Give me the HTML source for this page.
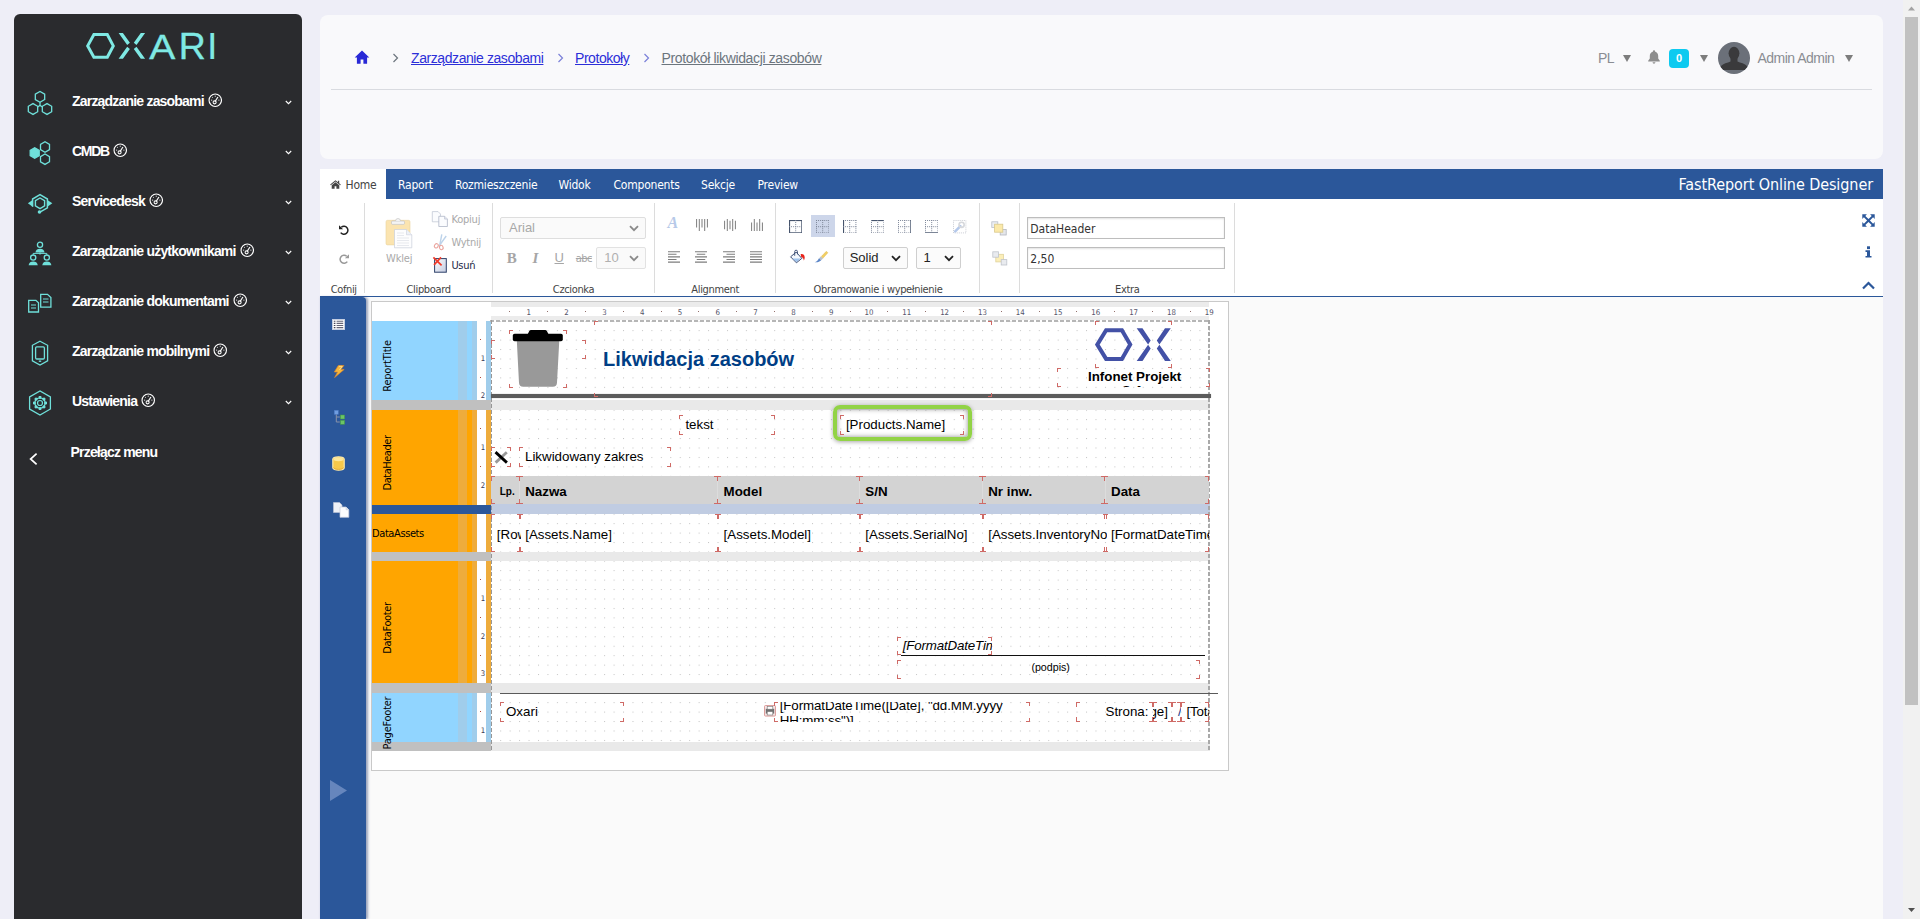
<!DOCTYPE html>
<html lang="pl">
<head>
<meta charset="utf-8">
<title>Protokół likwidacji zasobów</title>
<style>
*{box-sizing:border-box;margin:0;padding:0}
html,body{width:1920px;height:919px;overflow:hidden}
body{position:relative;background:#eeeef7;font-family:"Liberation Sans",sans-serif;font-size:14px;color:#212529}
.abs{position:absolute}
/* ---------- sidebar ---------- */
#side{position:absolute;left:14px;top:14px;width:288px;height:905px;background:#2a2b2e;border-radius:6px 6px 0 0}
#side .item{position:absolute;left:0;width:288px;height:50px}
#side .item .ico{position:absolute;left:11px;top:11.500px;width:30px;height:30px}
#side .item .lbl{position:absolute;left:58px;top:16px;font:bold 14px/18px "Liberation Sans",sans-serif;color:#fff;letter-spacing:-.8px;white-space:nowrap}
#side .item .chev{position:absolute;left:271.300px;top:23.700px;width:7px;height:5px}
#side .gauge{display:inline-block;width:14.500px;height:14.500px;vertical-align:-1.500px;margin-left:4px}
/* ---------- top card ---------- */
#card{position:absolute;left:320px;top:15px;width:1563px;height:144px;background:#f9f9fb;border-radius:8px}
#card .hr{position:absolute;left:11px;top:74px;width:1541px;height:1px;background:#d9dbe0}
.bc{position:absolute;top:34px;font:14px/18px "Liberation Sans",sans-serif;white-space:nowrap;text-decoration:underline;color:#2c2fd8}
.bcsep{position:absolute;top:38px;width:7px;height:10px}
.caret{position:absolute;width:0;height:0;border-left:4.5px solid transparent;border-right:4.5px solid transparent;border-top:7px solid #7d7d7d}
/* ---------- designer ---------- */
#tabs{position:absolute;left:320px;top:169px;width:1563px;height:30px;background:#2b579a;color:#fff;font:12px/30px "DejaVu Sans Condensed","DejaVu Sans",sans-serif;letter-spacing:-.22px}
#tabs span{position:absolute;top:.8px;white-space:nowrap}
#ribbon{position:absolute;left:320px;top:199px;width:1563px;height:98.200px;background:#fff;border-bottom:1.400px solid #2b579a;font:11px/13px "DejaVu Sans Condensed","DejaVu Sans",sans-serif;letter-spacing:-.35px;color:#444}
#ribbon .sep{position:absolute;top:4px;width:1px;height:90px;background:#dcdcdc}
#ribbon .gl{position:absolute;top:84px;white-space:nowrap;text-align:center;color:#444}
#ribbon .t{position:absolute;white-space:nowrap}
.dis{color:#a9a9a9}
.sel{position:absolute;height:22px;border:1px solid #d4d4d4;background:#fff;border-radius:2px;font:13px/20px "Liberation Sans",sans-serif;letter-spacing:0;padding-left:8px;color:#222}
.sel svg{position:absolute;right:6px;top:7px}
.inp{position:absolute;height:22px;border:1px solid #bdbdbd;background:#fff;font:12px/20px "DejaVu Sans Condensed",sans-serif;letter-spacing:0;padding-left:2.300px;padding-top:1px;color:#333;box-shadow:inset 0 1px 2px rgba(0,0,0,.12)}
#work{position:absolute;left:320px;top:297.200px;width:1563px;height:622px;background:#fafafa}
#lbar{position:absolute;left:320px;top:297px;width:46px;height:622px;background:#2b579a;border-top-right-radius:4px;box-shadow:1.500px 0 2.500px rgba(40,60,110,.45)}
#cont{position:absolute;left:371px;top:301.400px;width:858px;height:469.600px;background:#fff;border:1px solid #c9c9c9;overflow:hidden}
/* inside #cont coordinates are page coords minus (372,302) */
#cont .in{position:absolute;left:-372px;top:-302.400px;width:1920px;height:919px}
.band{position:absolute;left:372px;width:119px}
.band .bl{position:absolute;left:0;top:0;bottom:0;width:105px}
.band .s1{position:absolute;left:86px;top:0;bottom:0;width:9px}
.band .s2{position:absolute;left:100px;top:0;bottom:0;width:5px}
.band .rul{position:absolute;left:105px;top:0;bottom:0;width:9.1px;background:#fff}
.band .s3{position:absolute;left:114.1px;top:0;bottom:0;width:4.9px}
.band.blue .bl{background:#91d5ff}.band.blue .s1,.band.blue .s2,.band.blue .s3{background:#a0cdeb}
.band.or .bl{background:#ffa500}.band.or .s1,.band.or .s2,.band.or .s3{background:#eeac3c}
.band .name{position:absolute;left:15.200px;top:50%;width:0;height:0}
.band .name span{position:absolute;left:0;top:0;transform:translate(-50%,-50%) rotate(-90deg);white-space:nowrap;font:11px/13px "DejaVu Sans Condensed",sans-serif;letter-spacing:-.42px;color:#000;margin-top:5px}
.rn{position:absolute;left:478px;width:10px;text-align:center;font:7.700px/10px "DejaVu Sans Condensed",sans-serif;color:#3b3b55}
.rt{position:absolute;left:480px;width:1.3px;height:1.3px;background:#b04a3a}
.gapL{position:absolute;left:372px;width:119px;background:#c0c0c0}
.gapR{position:absolute;left:491px;width:719px;background:#e9e9e9}
.page{position:absolute;left:491px;width:719px;background-color:#fff;overflow:hidden}
.page svg{position:absolute;left:0;top:0}
.ob{position:absolute;white-space:nowrap;overflow:hidden;font:13.33px/15px "Liberation Sans",sans-serif;color:#000;
--c:#cf6a66;
background:
linear-gradient(var(--c),var(--c)) left top/4px 1px no-repeat,
linear-gradient(var(--c),var(--c)) left top/1px 4px no-repeat,
linear-gradient(var(--c),var(--c)) right top/4px 1px no-repeat,
linear-gradient(var(--c),var(--c)) right top/1px 4px no-repeat,
linear-gradient(var(--c),var(--c)) left bottom/4px 1px no-repeat,
linear-gradient(var(--c),var(--c)) left bottom/1px 4px no-repeat,
linear-gradient(var(--c),var(--c)) right bottom/4px 1px no-repeat,
linear-gradient(var(--c),var(--c)) right bottom/1px 4px no-repeat}
.ob.tm{overflow:hidden;background:
linear-gradient(var(--c),var(--c)) left top/4px 1px no-repeat,
linear-gradient(var(--c),var(--c)) left top/1px 5px no-repeat,
linear-gradient(var(--c),var(--c)) right top/4px 1px no-repeat,
linear-gradient(var(--c),var(--c)) right top/1px 5px no-repeat,
linear-gradient(var(--c),var(--c)) left bottom/4px 1px no-repeat,
linear-gradient(var(--c),var(--c)) left bottom/1px 5px no-repeat,
linear-gradient(var(--c),var(--c)) right bottom/4px 1px no-repeat,
linear-gradient(var(--c),var(--c)) right bottom/1px 5px no-repeat}
.ob i.tx{position:absolute;font-style:normal;left:6px}
</style>
</head>
<body>
<svg width="0" height="0" style="position:absolute"><defs><pattern id="dots" x="-.25" y="-.3" width="9.449" height="9.449" patternUnits="userSpaceOnUse"><rect x="0" y="0" width="1" height="1" fill="#c2c2c2"/></pattern></defs></svg>

<!-- ================= SIDEBAR ================= -->
<div id="side">
<svg class="abs" style="left:62px;top:10px" width="160" height="44" viewBox="76 24 160 44" role="img"><title>OXARI</title>
<polygon points="87.7,45.9 93.9,34.5 107.3,34.5 113.3,45.9 107.3,57.3 93.9,57.3" fill="none" stroke="#7fe9e4" stroke-width="3"/>
<path d="M118.60 33.00 L122.90 33.00 L129.90 42.75 L127.20 45.10Z M118.60 58.80 L122.90 58.80 L129.90 49.05 L127.20 46.70Z M145.10 33.00 L140.80 33.00 L133.80 42.75 L136.50 45.10Z M145.10 58.80 L140.80 58.80 L133.80 49.05 L136.50 46.70Z" fill="#7fe9e4"/>
<text transform="translate(149.300 58.800) scale(1.085 1)" font-family="Liberation Sans, sans-serif" font-size="36" fill="#7fe9e4" stroke="#7fe9e4" stroke-width=".35">A</text>
<text transform="translate(178.800 58.800) scale(1.040 1)" font-family="Liberation Sans, sans-serif" font-size="36" fill="#7fe9e4" stroke="#7fe9e4" stroke-width=".35">R</text>
<text x="207.300" y="58.800" font-family="Liberation Sans, sans-serif" font-size="36" fill="#7fe9e4" stroke="#7fe9e4" stroke-width=".2">I</text>
</svg>
<div class="item" style="top:62px"><svg class="ico" viewBox="0 0 30 30" fill="none" stroke="#6fe0da" stroke-width="1.3"><polygon points="19.68,11.50 15.00,14.20 10.32,11.50 10.32,6.10 15.00,3.40 19.68,6.10"/><polygon points="12.68,23.70 8.00,26.40 3.32,23.70 3.32,18.30 8.00,15.60 12.68,18.30"/><polygon points="26.68,23.70 22.00,26.40 17.32,23.70 17.32,18.30 22.00,15.60 26.68,18.30"/><path d="M15 14.2v3.3M15 17.5l-2.4 1.4M15 17.5l2.4 1.4"/></svg><span class="lbl">Zarządzanie zasobami<svg class="gauge" viewBox="0 0 14 14"><circle cx="7" cy="7" r="6" fill="none" stroke="#fff" stroke-width="1.1"/><path d="M7 2.6v1M3 6.9h1M10 6.9h1M4.1 4l.7.7" stroke="#fff" stroke-width=".9" fill="none"/><path d="M9.6 3.9 6.6 8.6" stroke="#fff" stroke-width="1.1" fill="none"/><circle cx="6.4" cy="9" r="1.5" fill="none" stroke="#fff" stroke-width="1"/></svg></span><svg class="chev" viewBox="0 0 7 5"><path d="M.8 1 3.5 3.7 6.2 1" fill="none" stroke="#fff" stroke-width="1.1"/></svg></div>
<div class="item" style="top:112px"><svg class="ico" viewBox="0 0 30 30" fill="none" stroke="#6fe0da" stroke-width="1.3"><polygon points="14.20,17.60 9.70,20.20 5.20,17.60 5.20,12.40 9.70,9.80 14.20,12.40" fill="#6fe0da"/><polygon points="24.50,11.60 20.00,14.20 15.50,11.60 15.50,6.40 20.00,3.80 24.50,6.40"/><polygon points="24.50,23.80 20.00,26.40 15.50,23.80 15.50,18.60 20.00,16.00 24.50,18.60"/></svg><span class="lbl"><span style="letter-spacing:-1.300px">CMDB</span><svg class="gauge" viewBox="0 0 14 14"><circle cx="7" cy="7" r="6" fill="none" stroke="#fff" stroke-width="1.1"/><path d="M7 2.6v1M3 6.9h1M10 6.9h1M4.1 4l.7.7" stroke="#fff" stroke-width=".9" fill="none"/><path d="M9.6 3.9 6.6 8.6" stroke="#fff" stroke-width="1.1" fill="none"/><circle cx="6.4" cy="9" r="1.5" fill="none" stroke="#fff" stroke-width="1"/></svg></span><svg class="chev" viewBox="0 0 7 5"><path d="M.8 1 3.5 3.7 6.2 1" fill="none" stroke="#fff" stroke-width="1.1"/></svg></div>
<div class="item" style="top:162px"><svg class="ico" viewBox="0 0 30 30" fill="none" stroke="#6fe0da" stroke-width="1.5"><polygon points="19.59,17.95 15.00,20.60 10.41,17.95 10.41,12.65 15.00,10.00 19.59,12.65" stroke-width="1.4"/><path d="M7.600 18.800V11L15 6.700 22.400 11v8.800L15.300 23.900" stroke-linejoin="miter"/><path d="M2.900 15.300 7.600 11.900v6.800Z" fill="#6fe0da" stroke="none"/><path d="M27.300 15.300 22.400 11.900v6.800Z" fill="#6fe0da" stroke="none"/><circle cx="14.500" cy="24" r="1.800" fill="#6fe0da" stroke="none"/></svg><span class="lbl">Servicedesk<svg class="gauge" viewBox="0 0 14 14"><circle cx="7" cy="7" r="6" fill="none" stroke="#fff" stroke-width="1.1"/><path d="M7 2.6v1M3 6.9h1M10 6.9h1M4.1 4l.7.7" stroke="#fff" stroke-width=".9" fill="none"/><path d="M9.6 3.9 6.6 8.6" stroke="#fff" stroke-width="1.1" fill="none"/><circle cx="6.4" cy="9" r="1.5" fill="none" stroke="#fff" stroke-width="1"/></svg></span><svg class="chev" viewBox="0 0 7 5"><path d="M.8 1 3.5 3.7 6.2 1" fill="none" stroke="#fff" stroke-width="1.1"/></svg></div>
<div class="item" style="top:212px"><svg class="ico" viewBox="0 0 30 30" fill="none" stroke="#6fe0da" stroke-width="1.3"><circle cx="15" cy="6.8" r="2.6"/><path d="M10.4 14.399999999999999c.5-2.600 2.200-3.600 4.600-3.600s4.100 1 4.600 3.600z" fill="#6fe0da" stroke="none"/><circle cx="8.2" cy="19.6" r="2.6"/><path d="M3.5999999999999996 27.200000000000003c.5-2.600 2.200-3.600 4.600-3.600s4.100 1 4.600 3.600z" fill="#6fe0da" stroke="none"/><circle cx="21.8" cy="19.6" r="2.6"/><path d="M17.200000000000003 27.200000000000003c.5-2.600 2.200-3.600 4.600-3.600s4.100 1 4.600 3.600z" fill="#6fe0da" stroke="none"/><path d="M15 14.400v2.200M8.200 16.800v-1.400h13.600v1.400" stroke-width="1"/></svg><span class="lbl">Zarządzanie użytkownikami<svg class="gauge" viewBox="0 0 14 14"><circle cx="7" cy="7" r="6" fill="none" stroke="#fff" stroke-width="1.1"/><path d="M7 2.6v1M3 6.9h1M10 6.9h1M4.1 4l.7.7" stroke="#fff" stroke-width=".9" fill="none"/><path d="M9.6 3.9 6.6 8.6" stroke="#fff" stroke-width="1.1" fill="none"/><circle cx="6.4" cy="9" r="1.5" fill="none" stroke="#fff" stroke-width="1"/></svg></span><svg class="chev" viewBox="0 0 7 5"><path d="M.8 1 3.5 3.7 6.2 1" fill="none" stroke="#fff" stroke-width="1.1"/></svg></div>
<div class="item" style="top:262px"><svg class="ico" style="top:10.500px" viewBox="0 0 30 30" fill="none" stroke="#6fe0da" stroke-width="1.3"><path d="M3.700 13.300h7.200l2.600 2.400v9.300H3.700z"/><path d="M6 18h5M6 21h5" stroke-width="1.100"/><path d="M15.700 7.300h6.800l3.400 3.200v9.600H15.700z"/><path d="M18 12h5.500M18 15h5.500" stroke-width="1.100"/></svg><span class="lbl">Zarządzanie dokumentami<svg class="gauge" viewBox="0 0 14 14"><circle cx="7" cy="7" r="6" fill="none" stroke="#fff" stroke-width="1.1"/><path d="M7 2.6v1M3 6.9h1M10 6.9h1M4.1 4l.7.7" stroke="#fff" stroke-width=".9" fill="none"/><path d="M9.6 3.9 6.6 8.6" stroke="#fff" stroke-width="1.1" fill="none"/><circle cx="6.4" cy="9" r="1.5" fill="none" stroke="#fff" stroke-width="1"/></svg></span><svg class="chev" viewBox="0 0 7 5"><path d="M.8 1 3.5 3.7 6.2 1" fill="none" stroke="#fff" stroke-width="1.1"/></svg></div>
<div class="item" style="top:312px"><svg class="ico" viewBox="0 0 30 30" fill="none" stroke="#6fe0da" stroke-width="1.3"><path d="M15 3.2 22.6 7.3V22.9L15 27 7.4 22.9V7.3Z"/><rect x="10.6" y="8.8" width="8.8" height="12.2" rx="1.2"/><path d="M13.8 23.2h2.4" stroke-width="1.4"/></svg><span class="lbl">Zarządzanie mobilnymi<svg class="gauge" viewBox="0 0 14 14"><circle cx="7" cy="7" r="6" fill="none" stroke="#fff" stroke-width="1.1"/><path d="M7 2.6v1M3 6.9h1M10 6.9h1M4.1 4l.7.7" stroke="#fff" stroke-width=".9" fill="none"/><path d="M9.6 3.9 6.6 8.6" stroke="#fff" stroke-width="1.1" fill="none"/><circle cx="6.4" cy="9" r="1.5" fill="none" stroke="#fff" stroke-width="1"/></svg></span><svg class="chev" viewBox="0 0 7 5"><path d="M.8 1 3.5 3.7 6.2 1" fill="none" stroke="#fff" stroke-width="1.1"/></svg></div>
<div class="item" style="top:362px"><svg class="ico" viewBox="0 0 30 30" fill="none" stroke="#6fe0da" stroke-width="1.3"><polygon points="25.39,21.00 15.00,27.00 4.61,21.00 4.61,9.00 15.00,3.00 25.39,9.00"/><circle cx="15" cy="15" r="5.2" stroke-width="1.3"/><circle cx="15" cy="15" r="2.4" stroke-width="1.2"/><path d="M19.20 15.00L22.00 15.00" stroke-width="2.6"/><path d="M17.97 17.97L19.95 19.95" stroke-width="2.6"/><path d="M15.00 19.20L15.00 22.00" stroke-width="2.6"/><path d="M12.03 17.97L10.05 19.95" stroke-width="2.6"/><path d="M10.80 15.00L8.00 15.00" stroke-width="2.6"/><path d="M12.03 12.03L10.05 10.05" stroke-width="2.6"/><path d="M15.00 10.80L15.00 8.00" stroke-width="2.6"/><path d="M17.97 12.03L19.95 10.05" stroke-width="2.6"/><circle cx="15" cy="15" r="3.6" fill="#2a2b2e" stroke="none"/><circle cx="15" cy="15" r="2.5" stroke-width="1.2"/></svg><span class="lbl">Ustawienia<svg class="gauge" viewBox="0 0 14 14"><circle cx="7" cy="7" r="6" fill="none" stroke="#fff" stroke-width="1.1"/><path d="M7 2.6v1M3 6.9h1M10 6.9h1M4.1 4l.7.7" stroke="#fff" stroke-width=".9" fill="none"/><path d="M9.6 3.9 6.6 8.6" stroke="#fff" stroke-width="1.1" fill="none"/><circle cx="6.4" cy="9" r="1.5" fill="none" stroke="#fff" stroke-width="1"/></svg></span><svg class="chev" viewBox="0 0 7 5"><path d="M.8 1 3.5 3.7 6.2 1" fill="none" stroke="#fff" stroke-width="1.1"/></svg></div>
<svg class="abs" style="left:14px;top:438px" width="12" height="14" viewBox="0 0 12 14"><path d="M8.6 1.6 2.6 7l6 5.4" fill="none" stroke="#fff" stroke-width="1.7"/></svg>
<span class="abs" style="left:56.5px;top:429px;font:bold 14px/18px 'Liberation Sans',sans-serif;color:#fff;letter-spacing:-.8px;white-space:nowrap">Przełącz menu</span>
</div>

<!-- ================= TOP CARD ================= -->
<div id="card">
  <svg class="abs" style="left:34px;top:35px" width="16" height="15" viewBox="0 0 16 15"><path d="M8 .6.7 7.4h2.2v6.4h3.7V9.6h2.8v4.2h3.7V7.4h2.2Z" fill="#2929d6"/></svg>
  <svg class="bcsep" style="left:72px" viewBox="0 0 7 10"><path d="M1.5 1 5.5 5 1.5 9" fill="none" stroke="#6c757d" stroke-width="1.2"/></svg>
  <span class="bc" style="left:91px;letter-spacing:-.42px">Zarządzanie zasobami</span>
  <svg class="bcsep" style="left:236.5px" viewBox="0 0 7 10"><path d="M1.5 1 5.5 5 1.5 9" fill="none" stroke="#7b80d8" stroke-width="1.2"/></svg>
  <span class="bc" style="left:255px;letter-spacing:-.45px">Protokoły</span>
  <svg class="bcsep" style="left:322.5px" viewBox="0 0 7 10"><path d="M1.5 1 5.5 5 1.5 9" fill="none" stroke="#7b80d8" stroke-width="1.2"/></svg>
  <span class="bc" style="left:341.5px;letter-spacing:-.36px;color:#6c757d">Protokół likwidacji zasobów</span>
  <div class="hr"></div>
  <span class="abs" style="left:1278px;top:34px;font:14px/18px 'Liberation Sans',sans-serif;color:#8a8d93;letter-spacing:-.6px">PL</span>
  <div class="caret" style="left:1302.5px;top:39.5px"></div>
  <svg class="abs" style="left:1327px;top:34px" width="14" height="16" viewBox="0 0 14 16"><path d="M7 1.2c-.6 0-1 .4-1 1v.4C3.900 3.200 2.800 5 2.800 7v2.600L1.200 11.800v.8h11.600v-.8L11.200 9.600V7c0-2-1.100-3.800-3.200-4.400v-.4c0-.6-.4-1-1-1zM5.600 13.300c0 .8.600 1.400 1.400 1.400s1.400-.6 1.400-1.400z" fill="#8d8d8d"/></svg>
  <div class="abs" style="left:1349px;top:34px;width:20px;height:19px;border-radius:4px;background:#0dcaf0;color:#fff;font:bold 11px/19px 'Liberation Sans',sans-serif;text-align:center">0</div>
  <div class="caret" style="left:1379.5px;top:39.5px"></div>
  <svg class="abs" style="left:1398px;top:27px" width="32" height="32" viewBox="0 0 32 32"><defs><clipPath id="avc"><circle cx="16" cy="16" r="16"/></clipPath></defs><circle cx="16" cy="16" r="16" fill="#6b7079"/><g clip-path="url(#avc)" fill="#3a3a3c"><ellipse cx="16" cy="11.300" rx="5.400" ry="6.600"/><path d="M12.500 15h7v4.500c3 1.300 7.500 2.200 9.500 4.500 1 1.200 1 3 1 4H2c0-1 0-2.800 1-4 2-2.300 6.500-3.200 9.500-4.500z"/></g></svg>
  <span class="abs" style="left:1437.5px;top:34px;font:14px/18px 'Liberation Sans',sans-serif;color:#8a8d93;letter-spacing:-.52px;white-space:nowrap">Admin Admin</span>
  <div class="caret" style="left:1524.5px;top:39.5px"></div>
</div>

<!-- ================= DESIGNER ================= -->
<div id="tabs">
  <div class="abs" style="left:0;top:0;width:66px;height:30px;background:#fff"></div>
  <svg class="abs" style="left:10px;top:11px" width="11" height="9" viewBox="0 0 11 9"><path d="M5.500 .2.200 4.600l.6.700L5.500 1.500l4.700 3.800.6-.7L9.200 3.300V.8H7.900v1.400ZM1.700 5.200v3.600h2.900V6.300h1.800v2.500h2.900V5.200L5.500 2.200Z" fill="#444"/></svg>
  <span style="left:25.500px;color:#444">Home</span>
  <span style="left:78px">Raport</span>
  <span style="left:135px">Rozmieszczenie</span>
  <span style="left:238.500px">Widok</span>
  <span style="left:293.500px">Components</span>
  <span style="left:381px">Sekcje</span>
  <span style="left:437.500px">Preview</span>
  <span style="right:10px;font-size:16px;letter-spacing:-.08px">FastReport Online Designer</span>
</div>
<div id="ribbon">
<div class="sep" style="left:44.0px"></div>
<div class="sep" style="left:171.7px"></div>
<div class="sep" style="left:334.0px"></div>
<div class="sep" style="left:455.0px"></div>
<div class="sep" style="left:658.8px"></div>
<div class="sep" style="left:698.8px"></div>
<div class="sep" style="left:914.0px"></div>
<span class="gl" style="left:-36.3px;width:120px">Cofnij</span>
<span class="gl" style="left:48.599999999999994px;width:120px">Clipboard</span>
<span class="gl" style="left:193.55px;width:120px">Czcionka</span>
<span class="gl" style="left:335.15px;width:120px">Alignment</span>
<span class="gl" style="left:468.0px;width:180px">Obramowanie i wypełnienie</span>
<span class="gl" style="left:747.25px;width:120px">Extra</span>
<svg class="abs" style="left:18px;top:25px" width="12" height="12" viewBox="0 0 12 12"><path d="M3.300 3.200A4 4 0 1 1 2.700 8.600" fill="none" stroke="#222" stroke-width="1.500"/><path d="M1 1.200v4.100h4.100Z" fill="#222"/></svg>
<svg class="abs" style="left:18px;top:54px" width="12" height="12" viewBox="0 0 12 12"><path d="M8.700 3.200A4 4 0 1 0 9.300 8.600" fill="none" stroke="#9a9a9a" stroke-width="1.500"/><path d="M11 1.200v4.100H6.900Z" fill="#9a9a9a"/></svg>
<svg class="abs" style="left:65px;top:18px" width="29" height="32" viewBox="385 217 29 32">
<rect x="386" y="220.300" width="24" height="24.600" rx="1.500" fill="#fbe4b0" stroke="#e9d3a0" stroke-width=".6"/>
<rect x="391.500" y="221" width="13" height="3.400" rx="1" fill="#f4f4f4" stroke="#bdbdbd" stroke-width=".6"/>
<path d="M395.500 221a2.500 2.500 0 0 1 5 0" fill="#f4f4f4" stroke="#bdbdbd" stroke-width=".6"/>
<path d="M394.500 229.500h12l5.300 5.300v13h-17.300z" fill="#fdfdfe" stroke="#c9cfdb" stroke-width=".7"/>
<path d="M406.500 229.500v5.300h5.300" fill="#eef1f6" stroke="#c9cfdb" stroke-width=".6"/>
<path d="M397 233h7M397 235.500h7M397 238h12M397 240.500h12M397 243h12M397 245.500h12" stroke="#dcdfe6" stroke-width=".7"/>
</svg>
<span class="t dis" style="left:66px;top:52.5px;letter-spacing:-.15px">Wklej</span>
<svg class="abs" style="left:111px;top:11px" width="18" height="18" viewBox="431 210 18 18">
<path d="M432.300 211.600h5.800l2.400 2.400v7.800h-8.200z" fill="#fbfcfe" stroke="#bcc3d1" stroke-width=".7"/>
<path d="M438.800 216.300h5.800l2.800 2.800v7.400h-8.600z" fill="#fbfcfe" stroke="#aeb6c7" stroke-width=".8"/>
<path d="M444.600 216.300v2.800h2.800" fill="#e4e8f0" stroke="#aeb6c7" stroke-width=".6"/></svg>
<span class="t dis" style="left:131.4px;top:13.5px;letter-spacing:-.2px">Kopiuj</span>
<svg class="abs" style="left:113px;top:34px" width="15" height="18" viewBox="433 233 15 18">
<path d="M441.800 234.300 439.600 246M446.200 236 439 246.200" stroke="#bdd3ea" stroke-width="1.400" fill="none"/>
<ellipse cx="436.300" cy="245.800" rx="1.800" ry="2.200" fill="none" stroke="#eaa39c" stroke-width="1.100" transform="rotate(30 436.300 245.800)"/>
<ellipse cx="441.300" cy="247.500" rx="1.800" ry="2.200" fill="none" stroke="#eaa39c" stroke-width="1.100" transform="rotate(-20 441.300 247.500)"/></svg>
<span class="t dis" style="left:131.4px;top:36.5px;letter-spacing:-.25px">Wytnij</span>
<svg class="abs" style="left:112px;top:57px" width="16" height="18" viewBox="432 256 16 18">
<defs><linearGradient id="gdl" x1="0" y1="0" x2="1" y2="1"><stop offset="0" stop-color="#fff"/><stop offset="1" stop-color="#c3cbe0"/></linearGradient></defs>
<rect x="434.600" y="258.600" width="11.700" height="13.600" fill="url(#gdl)" stroke="#2c3f68" stroke-width="1"/>
<path d="M433.400 257.400 441.600 265.400M441 257.400 434 264.800" stroke="#f03a2a" stroke-width="1.700" fill="none"/></svg>
<span class="t" style="left:131.4px;top:59.5px;color:#1d2947;letter-spacing:-.3px">Usuń</span>
<div class="sel" style="left:180px;top:18px;width:146px;background:#fafafa;color:#a8a8a8;border-color:#dedede">Arial<svg width="10" height="7" viewBox="0 0 10 7"><path d="M1 1.200 5 5.200 9 1.200" fill="none" stroke="#8a8a8a" stroke-width="1.800"/></svg></div>
<div class="sel" style="left:276px;top:48px;width:50px;background:#fafafa;color:#b0b0b0;border-color:#e2e2e2;padding-left:7.300px">10<svg width="10" height="7" viewBox="0 0 10 7"><path d="M1 1.200 5 5.200 9 1.200" fill="none" stroke="#8a8a8a" stroke-width="1.800"/></svg></div>
<span class="t" style="left:186.7px;top:50px;font:bold 15px/18px 'Liberation Serif',serif;color:#a6a6a6;letter-spacing:0">B</span>
<span class="t" style="left:212.5px;top:50px;font:italic bold 15px/18px 'Liberation Serif',serif;color:#a6a6a6;letter-spacing:0">I</span>
<span class="t" style="left:234.5px;top:50px;font:13px/18px 'Liberation Sans',sans-serif;color:#a6a6a6;text-decoration:underline;letter-spacing:0">U</span>
<span class="t" style="left:255.8px;top:51.5px;font:11px/16px 'DejaVu Sans Condensed',sans-serif;color:#a6a6a6;text-decoration:line-through;letter-spacing:-.6px">abc</span>
<span class="t" style="left:347.5px;top:14.5px;font:italic bold 16px/18px 'Liberation Serif',serif;color:#b7c9e8;letter-spacing:0">A</span>
<svg class="abs" style="left:375.7px;top:20px" width="12" height="12" viewBox="0 0 12 12"><path d="M0.60 0.00v8.5M3.30 0.00v12M6.00 0.00v8.5M8.70 0.00v12M11.40 0.00v8.5" stroke="#7d7d7d" stroke-width="1" fill="none"/></svg>
<svg class="abs" style="left:403.5px;top:20px" width="12" height="12" viewBox="0 0 12 12"><path d="M0.60 1.75v8.5M3.30 0.00v12M6.00 1.75v8.5M8.70 0.00v12M11.40 1.75v8.5" stroke="#7d7d7d" stroke-width="1" fill="none"/></svg>
<svg class="abs" style="left:430.6px;top:20px" width="12" height="12" viewBox="0 0 12 12"><path d="M0.60 3.50v8.5M3.30 0.00v12M6.00 3.50v8.5M8.70 0.00v12M11.40 3.50v8.5" stroke="#7d7d7d" stroke-width="1" fill="none"/></svg>
<svg class="abs" style="left:347.8px;top:51.6px" width="12" height="12" viewBox="0 0 12 12"><path d="M0.00 0.70h12M0.00 3.30h8.5M0.00 5.90h12M0.00 8.50h8.5M0.00 11.10h12" stroke="#7d7d7d" stroke-width="1.100" fill="none"/></svg>
<svg class="abs" style="left:375px;top:51.6px" width="12" height="12" viewBox="0 0 12 12"><path d="M0.00 0.70h12M1.75 3.30h8.5M0.00 5.90h12M1.75 8.50h8.5M0.00 11.10h12" stroke="#7d7d7d" stroke-width="1.100" fill="none"/></svg>
<svg class="abs" style="left:403px;top:51.6px" width="12" height="12" viewBox="0 0 12 12"><path d="M0.00 0.70h12M3.50 3.30h8.5M0.00 5.90h12M3.50 8.50h8.5M0.00 11.10h12" stroke="#7d7d7d" stroke-width="1.100" fill="none"/></svg>
<svg class="abs" style="left:430.2px;top:51.6px" width="12" height="12" viewBox="0 0 12 12"><path d="M0.00 0.70h12M0.00 3.30h12M0.00 5.90h12M0.00 8.50h12M0.00 11.10h12" stroke="#7d7d7d" stroke-width="1.100" fill="none"/></svg>
<div class="abs" style="left:491px;top:16px;width:24px;height:22px;background:#cdd6ea"></div>
<svg class="abs" style="left:468.9px;top:20.8px" width="13.400" height="13.400" viewBox="0 0 13.400 13.400"><path d="M0 0.5L13.4 0.5" stroke="#46546c" stroke-width="1.200"/><path d="M0 12.9L13.4 12.9" stroke="#46546c" stroke-width="1.200"/><path d="M0.5 0L0.5 13.4" stroke="#46546c" stroke-width="1.200"/><path d="M12.9 0L12.9 13.4" stroke="#46546c" stroke-width="1.200"/><path d="M0 6.700h13.400M6.700 0v13.400" stroke="#7c8698" stroke-width="1" stroke-dasharray="1 1.060"/></svg>
<svg class="abs" style="left:496.1px;top:20.8px" width="13.400" height="13.400" viewBox="0 0 13.400 13.400"><path d="M0 0.5L13.4 0.5" stroke="#7c8698" stroke-width="1" stroke-dasharray="1 1.060"/><path d="M0 12.9L13.4 12.9" stroke="#7c8698" stroke-width="1" stroke-dasharray="1 1.060"/><path d="M0.5 0L0.5 13.4" stroke="#7c8698" stroke-width="1" stroke-dasharray="1 1.060"/><path d="M12.9 0L12.9 13.4" stroke="#7c8698" stroke-width="1" stroke-dasharray="1 1.060"/><path d="M0 6.700h13.400M6.700 0v13.400" stroke="#7c8698" stroke-width="1" stroke-dasharray="1 1.060"/></svg>
<svg class="abs" style="left:523.3px;top:20.8px" width="13.400" height="13.400" viewBox="0 0 13.400 13.400"><path d="M0 0.5L13.4 0.5" stroke="#7c8698" stroke-width="1" stroke-dasharray="1 1.060"/><path d="M0 12.9L13.4 12.9" stroke="#7c8698" stroke-width="1" stroke-dasharray="1 1.060"/><path d="M0.5 0L0.5 13.4" stroke="#46546c" stroke-width="1.200"/><path d="M12.9 0L12.9 13.4" stroke="#7c8698" stroke-width="1" stroke-dasharray="1 1.060"/><path d="M0 6.700h13.400M6.700 0v13.400" stroke="#7c8698" stroke-width="1" stroke-dasharray="1 1.060"/></svg>
<svg class="abs" style="left:550.5px;top:20.8px" width="13.400" height="13.400" viewBox="0 0 13.400 13.400"><path d="M0 0.5L13.4 0.5" stroke="#46546c" stroke-width="1.200"/><path d="M0 12.9L13.4 12.9" stroke="#7c8698" stroke-width="1" stroke-dasharray="1 1.060"/><path d="M0.5 0L0.5 13.4" stroke="#7c8698" stroke-width="1" stroke-dasharray="1 1.060"/><path d="M12.9 0L12.9 13.4" stroke="#7c8698" stroke-width="1" stroke-dasharray="1 1.060"/><path d="M0 6.700h13.400M6.700 0v13.400" stroke="#7c8698" stroke-width="1" stroke-dasharray="1 1.060"/></svg>
<svg class="abs" style="left:577.7px;top:20.8px" width="13.400" height="13.400" viewBox="0 0 13.400 13.400"><path d="M0 0.5L13.4 0.5" stroke="#7c8698" stroke-width="1" stroke-dasharray="1 1.060"/><path d="M0 12.9L13.4 12.9" stroke="#7c8698" stroke-width="1" stroke-dasharray="1 1.060"/><path d="M0.5 0L0.5 13.4" stroke="#7c8698" stroke-width="1" stroke-dasharray="1 1.060"/><path d="M12.9 0L12.9 13.4" stroke="#46546c" stroke-width="1.200"/><path d="M0 6.700h13.400M6.700 0v13.400" stroke="#7c8698" stroke-width="1" stroke-dasharray="1 1.060"/></svg>
<svg class="abs" style="left:604.9px;top:20.8px" width="13.400" height="13.400" viewBox="0 0 13.400 13.400"><path d="M0 0.5L13.4 0.5" stroke="#7c8698" stroke-width="1" stroke-dasharray="1 1.060"/><path d="M0 12.9L13.4 12.9" stroke="#46546c" stroke-width="1.200"/><path d="M0.5 0L0.5 13.4" stroke="#7c8698" stroke-width="1" stroke-dasharray="1 1.060"/><path d="M12.9 0L12.9 13.4" stroke="#7c8698" stroke-width="1" stroke-dasharray="1 1.060"/><path d="M0 6.700h13.400M6.700 0v13.400" stroke="#7c8698" stroke-width="1" stroke-dasharray="1 1.060"/></svg>
<svg class="abs" style="left:632.9px;top:20.8px" width="14" height="14" viewBox="0 0 14 14"><rect x=".5" y=".5" width="12.400" height="12.400" fill="none" stroke="#c9ccd3" stroke-dasharray="1 1.060"/><path d="M2.200 11.300 7.400 6.100" stroke="#b4c8ea" stroke-width="2.600" stroke-linecap="round"/><circle cx="8.600" cy="4.800" r="2.600" fill="none" stroke="#d6d8dc" stroke-width="1.600"/></svg>
<svg class="abs" style="left:469px;top:50px" width="17" height="15" viewBox="0 0 17 15"><path d="M1.600 7.800 7.200 3.100 12.800 9.400 7.400 13.800Z" fill="#f4f8fd" stroke="#3b4d74" stroke-width="1"/><path d="M5.700 6.800V2.600a1.400 1.400 0 0 1 2.800 0v2.700" fill="none" stroke="#3b4d74" stroke-width=".9"/><path d="M11.600 5.200c2.400-.8 4.200.6 4.100 3.600-.1 1.300-.4 2-.9 2.700-.2-2-.900-3.200-2.600-3.600z" fill="#e8241c"/><path d="M3.500 9.500l4 3.600 4.200-3.500z" fill="#9fc3ee"/></svg>
<svg class="abs" style="left:493.5px;top:51px" width="15" height="13" viewBox="0 0 15 13"><path d="M7.200 6.600 12.300 1.300l1.600 1.400L8.900 8.300Z" fill="#f2cf63" stroke="#d9b145" stroke-width=".4"/><path d="M5 8.200 7 6.400l2 2-1.800 1.800Z" fill="#b9c0cc"/><path d="M.6 12.200c2-.4 3.200-1.500 4.400-4l2.200 2c-1.400 1.500-3.600 2.300-6.600 2z" fill="#5c86c8"/></svg>
<div class="sel" style="left:523px;top:48px;width:65px;background:#fbfbfb;border-color:#cfcfcf;padding-left:5.700px">Solid<svg width="10" height="7" viewBox="0 0 10 7"><path d="M1 1.200 5 5.200 9 1.200" fill="none" stroke="#222" stroke-width="1.800"/></svg></div>
<div class="sel" style="left:596px;top:48px;width:45px;background:#fbfbfb;border-color:#cfcfcf;padding-left:6.500px">1<svg width="10" height="7" viewBox="0 0 10 7"><path d="M1 1.200 5 5.200 9 1.200" fill="none" stroke="#222" stroke-width="1.800"/></svg></div>
<svg class="abs" style="left:670.5px;top:21.5px" width="16" height="15" viewBox="0 0 16 15"><rect x=".8" y=".8" width="6" height="5.600" fill="#eceff4" stroke="#b9bec8" stroke-width=".8"/><rect x="9.200" y="8.400" width="6" height="5.600" fill="#e4e6ea" stroke="#b3b7c0" stroke-width=".8"/><rect x="3.600" y="3.200" width="8.200" height="8" fill="#fbe9a9" stroke="#d9c98c" stroke-width=".8"/></svg>
<svg class="abs" style="left:671.7px;top:51.5px" width="16" height="15" viewBox="0 0 16 15"><rect x="3.800" y="3.300" width="7.600" height="7.600" fill="#fbeeb8" stroke="#e0d29c" stroke-width=".8"/><rect x=".8" y=".8" width="5.600" height="5.400" fill="#e9ebef" stroke="#bfc3cb" stroke-width=".8"/><rect x="9.200" y="8.600" width="5.600" height="5.400" fill="#e9ebef" stroke="#bfc3cb" stroke-width=".8"/></svg>
<div class="inp" style="left:707px;top:18px;width:198px">DataHeader</div>
<div class="inp" style="left:707px;top:48px;width:198px">2,50</div>
<svg class="abs" style="left:1541.5px;top:14.8px" width="13" height="13" viewBox="0 0 13 13"><path d="M.3.300h4.600L3.300 1.900 6.500 5.100 9.700 1.900 8.100.3h4.600v4.600L11.100 3.300 7.900 6.500l3.200 3.200 1.600-1.600v4.600H8.100l1.600-1.600L6.500 7.900 3.300 11.100l1.600 1.600H.3V8.100l1.600 1.600L5.100 6.500 1.900 3.300.3 4.900Z" fill="#2b579a"/></svg>
<svg class="abs" style="left:1545px;top:47px" width="7" height="12" viewBox="0 0 7 12"><rect x="2" y=".3" width="3" height="2.800" fill="#2b579a"/><path d="M.5 4.300H5v5.600h1.500v1.600H.5V9.900H2V5.900H.5Z" fill="#2b579a"/></svg>
<svg class="abs" style="left:1541.5px;top:82px" width="13" height="9" viewBox="0 0 13 9"><path d="M1 7.500 6.500 2 12 7.500" fill="none" stroke="#2b579a" stroke-width="2.200"/></svg>
</div>
<div id="work"></div>
<div id="lbar">
<svg class="abs" style="left:12px;top:22px" width="13" height="11" viewBox="0 0 13 11"><rect x=".3" y=".3" width="12.400" height="10.400" fill="#fdfdfd" stroke="#c9d1e4" stroke-width=".6"/><path d="M1.800 2.300h1.600M1.800 4.400h1.600M1.800 6.500h1.600M1.800 8.600h1.600" stroke="#445" stroke-width="1.100"/><path d="M4.600 2.300h6.600M4.600 4.400h6.600M4.600 6.500h6.600M4.600 8.600h6.600" stroke="#667" stroke-width="1.100"/></svg>
<svg class="abs" style="left:13px;top:68px" width="12" height="13" viewBox="0 0 12 13"><path d="M5.300.5h5.600L7.900 4.400h3.300L1.600 12.600 4.600 7H1.300Z" fill="#f6b73c" stroke="#e0862a" stroke-width=".7"/><path d="M6 1.300h3.200L6.500 5" stroke="#fde7a0" stroke-width=".8" fill="none"/></svg>
<svg class="abs" style="left:13.500px;top:113px" width="12" height="15" viewBox="0 0 12 15"><path d="M2.300 4v8h3.500M2.300 7h3.500" stroke="#8a93a8" stroke-width="1" fill="none"/><rect x=".3" y=".3" width="4" height="4" fill="#6f9de0" stroke="#4a78c4" stroke-width=".5"/><rect x="6.400" y="5" width="4.200" height="4" fill="#6cc466" stroke="#3f9a3c" stroke-width=".5"/><rect x="6.400" y="10.300" width="4.200" height="4" fill="#6cc466" stroke="#3f9a3c" stroke-width=".5"/></svg>
<svg class="abs" style="left:11.500px;top:159px" width="13" height="15" viewBox="0 0 13 15"><path d="M.8 3.200C.8 1.800 3.300.8 6.500.8s5.700 1 5.700 2.400v8.600c0 1.400-2.500 2.400-5.700 2.400S.8 13.200.8 11.800Z" fill="#f7c84a" stroke="#fbe7a8" stroke-width="1.200"/><ellipse cx="6.500" cy="3.300" rx="5" ry="1.900" fill="#fde79a"/><path d="M1.500 11.500c.6 1.200 2.600 1.900 5 1.900s4.400-.7 5-1.900" stroke="#e0a62e" stroke-width=".8" fill="none"/></svg>
<svg class="abs" style="left:12.500px;top:204.500px" width="17" height="16" viewBox="0 0 17 16"><path d="M.5.500h6l2.500 2.500v7.500H.5Z" fill="#eef1f7" stroke="#b9c1d4" stroke-width=".7"/><path d="M7 5h6l2.800 2.800v7.500H7Z" fill="#fbfcfe" stroke="#c5ccdc" stroke-width=".7"/><path d="M13 5v2.800h2.800" fill="#dfe4ee" stroke="#c5ccdc" stroke-width=".5"/></svg>
<svg class="abs" style="left:10px;top:483px" width="17" height="21" viewBox="0 0 17 21"><path d="M0 0 17 10.500 0 21Z" fill="#6686bd"/></svg>
</div>
<div id="cont"><div class="in">
<div class="abs" style="left:491px;top:302.200px;width:718px;height:4.500px;background:#ebebeb"></div>
<div class="abs" style="left:491px;top:316.100px;width:718px;height:4.300px;background:#ececec"></div>
<span class="abs" style="left:518.8px;top:308.100px;width:20px;text-align:center;font:7.800px/10px 'DejaVu Sans Condensed',sans-serif;color:#55556a">1</span>
<span class="abs" style="left:556.6px;top:308.100px;width:20px;text-align:center;font:7.800px/10px 'DejaVu Sans Condensed',sans-serif;color:#55556a">2</span>
<span class="abs" style="left:594.4px;top:308.100px;width:20px;text-align:center;font:7.800px/10px 'DejaVu Sans Condensed',sans-serif;color:#55556a">3</span>
<span class="abs" style="left:632.2px;top:308.100px;width:20px;text-align:center;font:7.800px/10px 'DejaVu Sans Condensed',sans-serif;color:#55556a">4</span>
<span class="abs" style="left:670.0px;top:308.100px;width:20px;text-align:center;font:7.800px/10px 'DejaVu Sans Condensed',sans-serif;color:#55556a">5</span>
<span class="abs" style="left:707.8px;top:308.100px;width:20px;text-align:center;font:7.800px/10px 'DejaVu Sans Condensed',sans-serif;color:#55556a">6</span>
<span class="abs" style="left:745.6px;top:308.100px;width:20px;text-align:center;font:7.800px/10px 'DejaVu Sans Condensed',sans-serif;color:#55556a">7</span>
<span class="abs" style="left:783.4px;top:308.100px;width:20px;text-align:center;font:7.800px/10px 'DejaVu Sans Condensed',sans-serif;color:#55556a">8</span>
<span class="abs" style="left:821.2px;top:308.100px;width:20px;text-align:center;font:7.800px/10px 'DejaVu Sans Condensed',sans-serif;color:#55556a">9</span>
<span class="abs" style="left:859.0px;top:308.100px;width:20px;text-align:center;font:7.800px/10px 'DejaVu Sans Condensed',sans-serif;color:#55556a">10</span>
<span class="abs" style="left:896.8px;top:308.100px;width:20px;text-align:center;font:7.800px/10px 'DejaVu Sans Condensed',sans-serif;color:#55556a">11</span>
<span class="abs" style="left:934.6px;top:308.100px;width:20px;text-align:center;font:7.800px/10px 'DejaVu Sans Condensed',sans-serif;color:#55556a">12</span>
<span class="abs" style="left:972.4px;top:308.100px;width:20px;text-align:center;font:7.800px/10px 'DejaVu Sans Condensed',sans-serif;color:#55556a">13</span>
<span class="abs" style="left:1010.2px;top:308.100px;width:20px;text-align:center;font:7.800px/10px 'DejaVu Sans Condensed',sans-serif;color:#55556a">14</span>
<span class="abs" style="left:1048.0px;top:308.100px;width:20px;text-align:center;font:7.800px/10px 'DejaVu Sans Condensed',sans-serif;color:#55556a">15</span>
<span class="abs" style="left:1085.8px;top:308.100px;width:20px;text-align:center;font:7.800px/10px 'DejaVu Sans Condensed',sans-serif;color:#55556a">16</span>
<span class="abs" style="left:1123.6px;top:308.100px;width:20px;text-align:center;font:7.800px/10px 'DejaVu Sans Condensed',sans-serif;color:#55556a">17</span>
<span class="abs" style="left:1161.4px;top:308.100px;width:20px;text-align:center;font:7.800px/10px 'DejaVu Sans Condensed',sans-serif;color:#55556a">18</span>
<span class="abs" style="left:1199.2px;top:308.100px;width:20px;text-align:center;font:7.800px/10px 'DejaVu Sans Condensed',sans-serif;color:#55556a">19</span>
<div class="abs" style="left:509px;top:311px;width:1px;height:1px;background:#94706c"></div>
<div class="abs" style="left:547px;top:311px;width:1px;height:1px;background:#94706c"></div>
<div class="abs" style="left:585px;top:311px;width:1px;height:1px;background:#94706c"></div>
<div class="abs" style="left:623px;top:311px;width:1px;height:1px;background:#94706c"></div>
<div class="abs" style="left:661px;top:311px;width:1px;height:1px;background:#94706c"></div>
<div class="abs" style="left:698px;top:311px;width:1px;height:1px;background:#94706c"></div>
<div class="abs" style="left:736px;top:311px;width:1px;height:1px;background:#94706c"></div>
<div class="abs" style="left:774px;top:311px;width:1px;height:1px;background:#94706c"></div>
<div class="abs" style="left:812px;top:311px;width:1px;height:1px;background:#94706c"></div>
<div class="abs" style="left:850px;top:311px;width:1px;height:1px;background:#94706c"></div>
<div class="abs" style="left:887px;top:311px;width:1px;height:1px;background:#94706c"></div>
<div class="abs" style="left:925px;top:311px;width:1px;height:1px;background:#94706c"></div>
<div class="abs" style="left:963px;top:311px;width:1px;height:1px;background:#94706c"></div>
<div class="abs" style="left:1001px;top:311px;width:1px;height:1px;background:#94706c"></div>
<div class="abs" style="left:1039px;top:311px;width:1px;height:1px;background:#94706c"></div>
<div class="abs" style="left:1076px;top:311px;width:1px;height:1px;background:#94706c"></div>
<div class="abs" style="left:1114px;top:311px;width:1px;height:1px;background:#94706c"></div>
<div class="abs" style="left:1152px;top:311px;width:1px;height:1px;background:#94706c"></div>
<div class="abs" style="left:1190px;top:311px;width:1px;height:1px;background:#94706c"></div>
<div class="gapL" style="top:399.9px;height:10.1px"></div><div class="gapR" style="top:399.9px;height:10.1px"></div>
<div class="gapL" style="top:551.1px;height:10.0px"></div><div class="gapR" style="top:551.1px;height:10.0px"></div>
<div class="gapL" style="top:682.8px;height:10.1px"></div><div class="gapR" style="top:682.8px;height:10.1px"></div>
<div class="gapL" style="top:741.6px;height:9.5px"></div><div class="gapR" style="top:741.6px;height:9.5px"></div>
<div class="gapL" style="top:504.400px;height:9.800px;background:#2b579a"></div><div class="gapR" style="top:504.400px;height:9.800px;background:#c0cce2"></div>
<div class="band blue" style="top:320.8px;height:79.5px"><div class="bl"></div><div class="s1"></div><div class="s2"></div><div class="rul"></div><div class="s3"></div><div class="name"><span style="letter-spacing:-0.22px">ReportTitle</span></div></div>
<div class="page" style="top:320.8px;height:79.5px"><svg width="719" height="79.5"><rect x="0" y="0" width="719" height="79.5" fill="url(#dots)"/></svg></div>
<span class="rn" style="top:354.3px">1</span>
<span class="rn" style="top:391.3px">2</span>
<div class="rt" style="top:339.1px"></div>
<div class="rt" style="top:376.9px"></div>
<div class="band or" style="top:409.6px;height:95.1px"><div class="bl"></div><div class="s1"></div><div class="s2"></div><div class="rul"></div><div class="s3"></div><div class="name"><span style="letter-spacing:-.47px;margin-top:6px">DataHeader</span></div></div>
<div class="page" style="top:409.6px;height:94.8px"><svg width="719" height="94.8"><rect x="0" y="0" width="719" height="94.8" fill="url(#dots)"/></svg></div>
<span class="rn" style="top:443.0px">1</span>
<span class="rn" style="top:481.2px">2</span>
<div class="rt" style="top:427.9px"></div>
<div class="rt" style="top:465.7px"></div>
<div class="band or" style="top:513.9px;height:37.9px"><div class="bl"></div><div class="s1"></div><div class="s2"></div><div class="rul"></div><div class="s3"></div><span class="abs" style="left:0;top:13.0px;font:11px/13px 'DejaVu Sans Condensed',sans-serif;letter-spacing:-.4px;color:#000">DataAssets</span></div>
<div class="page" style="top:513.9px;height:37.9px"><svg width="719" height="38.0"><rect x="0" y="0" width="719" height="38.0" fill="url(#dots)"/></svg></div>
<div class="band or" style="top:560.7px;height:122.5px"><div class="bl"></div><div class="s1"></div><div class="s2"></div><div class="rul"></div><div class="s3"></div><div class="name"><span style="letter-spacing:-.37px;margin-top:6.200px">DataFooter</span></div></div>
<div class="page" style="top:560.7px;height:122.5px"><svg width="719" height="122.5"><rect x="0" y="0" width="719" height="122.5" fill="url(#dots)"/></svg></div>
<span class="rn" style="top:594.0px">1</span>
<span class="rn" style="top:632.0px">2</span>
<span class="rn" style="top:669.4px">3</span>
<div class="rt" style="top:579.0px"></div>
<div class="rt" style="top:616.8px"></div>
<div class="rt" style="top:654.6px"></div>
<div class="band blue" style="top:692.5px;height:49.5px"><div class="bl"></div><div class="s1"></div><div class="s2"></div><div class="rul"></div><div class="s3"></div><div class="name"><span style="letter-spacing:-.25px;margin-top:5.500px">PageFooter</span></div></div>
<div class="page" style="top:692.5px;height:49.5px"><svg width="719" height="49.5"><rect x="0" y="0" width="719" height="49.5" fill="url(#dots)"/></svg></div>
<span class="rn" style="top:726.0px">1</span>
<div class="rt" style="top:710.8px"></div>
<div class="abs" style="left:490.300px;top:319.900px;width:719.700px;height:1.900px;background:repeating-linear-gradient(90deg,#b6b6b6 0,#b6b6b6 4px,rgba(255,255,255,0) 4px,rgba(255,255,255,0) 6px)"></div>
<div class="abs" style="left:490.500px;top:320.200px;width:1.300px;height:430.600px;background:repeating-linear-gradient(180deg,#979797 0,#979797 4px,rgba(255,255,255,0) 4px,rgba(255,255,255,0) 6px)"></div>
<div class="abs" style="left:1208.100px;top:320.200px;width:1.800px;height:430.600px;background:repeating-linear-gradient(180deg,#a9a9a9 0,#a9a9a9 4px,rgba(255,255,255,0) 4px,rgba(255,255,255,0) 6px)"></div>
<div class="abs" style="left:491.300px;top:394.300px;width:719.500px;height:3.800px;background:#5c5c5c;box-shadow:0 0 .8px #5c5c5c"></div>
<div class="ob" style="left:490.5px;top:339.5px;width:95.5px;height:19.7px;"></div>
<div class="ob" style="left:594.2px;top:321.0px;width:397.8px;height:76.0px;"><i class="tx" style="left:8.8px;top:26.8px;font:bold 20px/23px 'Liberation Sans',sans-serif;color:#003e85">Likwidacja zasobów</i></div>
<div class="ob" style="left:509.2px;top:330.0px;width:58.0px;height:57.6px;"><svg class="abs" style="left:0;top:0" width="58" height="57.600" viewBox="509.200 330 58 57.600"><path d="M517 340.500h42.500l-2.300 42.200a4.200 4.200 0 0 1-4.200 4h-29.600a4.200 4.200 0 0 1-4.200-4z" fill="#999"/><path d="M531.200 330.100h14.200a2 2 0 0 1 1.700 1l1.500 3h-20.600l1.500-3a2 2 0 0 1 1.700-1z" fill="#000"/><rect x="513" y="333.800" width="50" height="7.400" rx="1.800" fill="#000"/></svg></div>
<div class="ob" style="left:1095.2px;top:320.8px;width:76.4px;height:47.6px;"><svg class="abs" style="left:0;top:0" width="76.400" height="47.600" viewBox="1095.200 320.800 76.400 47.600"><polygon points="1097.500,344.400 1106.300,330.100 1122.100,330.100 1130.400,344.400 1122.100,358.700 1106.300,358.700" fill="none" stroke="#4351a6" stroke-width="4"/><path d="M1136.900 328.100h5.800l8.200 12.300-2.600 3.900ZM1136.900 360.700h5.800l8.200-12.300-2.600-3.900ZM1171 328.100h-5.800l-8.200 12.300 2.600 3.900ZM1171 360.700h-5.800l-8.200-12.300 2.600-3.900Z" fill="#4351a6"/></svg></div>
<div class="ob" style="left:1057.2px;top:368.0px;width:152.4px;height:19.4px;"><i class="tx" style="left:0;width:100%;text-align:center;top:1.500px;font:bold 13.330px/14.700px 'Liberation Sans',sans-serif;padding-left:2.500px">Infonet Projekt<br>S.A.</i></div>
<div class="ob" style="left:679.0px;top:415.2px;width:96.0px;height:19.5px;"><i class="tx" style="left:6.400px;top:2px">tekst</i></div>
<div class="abs" style="left:832.700px;top:405.400px;width:139.200px;height:35.800px;border:4px solid #92d346;border-radius:7px;box-shadow:0 1px 4px rgba(0,0,0,.35),inset 0 0 5px rgba(0,0,0,.45)"></div>
<div class="ob" style="left:840.2px;top:415.0px;width:124.0px;height:19.9px;"><i class="tx" style="left:5.700px;top:2.200px">[Products.Name]</i></div>
<div class="ob" style="left:490.5px;top:447.0px;width:20.0px;height:19.5px;"><svg class="abs" style="left:0;top:0" width="20" height="19" viewBox="490.500 447 20 19"><path d="M506.300 452.200 495.100 462.600" stroke="#999" stroke-width="2.800"/><path d="M495 452.100 506.400 462.600" stroke="#000" stroke-width="2.800"/></svg></div>
<div class="ob" style="left:519.0px;top:447.0px;width:151.8px;height:19.5px;"><i class="tx" style="left:6px;top:1.700px">Likwidowany zakres</i></div>
<div class="abs" style="left:491.050px;top:476px;width:718.400px;height:28.400px;background:#d3d3d3"></div>
<div class="abs" style="left:518.9px;top:476px;width:1px;height:28.400px;background:#dcdcdc"></div>
<div class="abs" style="left:717.3px;top:476px;width:1px;height:28.400px;background:#dcdcdc"></div>
<div class="abs" style="left:859.0px;top:476px;width:1px;height:28.400px;background:#dcdcdc"></div>
<div class="abs" style="left:981.9px;top:476px;width:1px;height:28.400px;background:#dcdcdc"></div>
<div class="abs" style="left:1104.7px;top:476px;width:1px;height:28.400px;background:#dcdcdc"></div>
<div class="ob tm" style="left:491px;top:476.0px;width:29.0px;height:28.4px;"><i class="tx" style="left:8.700px;top:8.300px;font:bold 10px/15px 'Liberation Sans',sans-serif">Lp.</i></div>
<div class="ob tm" style="left:519px;top:476.0px;width:199.0px;height:28.4px;"><i class="tx" style="left:6.20px;top:8.300px;font:bold 13.330px/15px 'Liberation Sans',sans-serif">Nazwa</i></div>
<div class="ob tm" style="left:717px;top:476.0px;width:143.0px;height:28.4px;"><i class="tx" style="left:6.60px;top:8.300px;font:bold 13.330px/15px 'Liberation Sans',sans-serif">Model</i></div>
<div class="ob tm" style="left:859px;top:476.0px;width:124.0px;height:28.4px;"><i class="tx" style="left:6.30px;top:8.300px;font:bold 13.330px/15px 'Liberation Sans',sans-serif">S/N</i></div>
<div class="ob tm" style="left:982px;top:476.0px;width:123.0px;height:28.4px;"><i class="tx" style="left:6.20px;top:8.300px;font:bold 13.330px/15px 'Liberation Sans',sans-serif">Nr inw.</i></div>
<div class="ob tm" style="left:1104px;top:476.0px;width:105.4px;height:28.4px;"><i class="tx" style="left:7.00px;top:8.300px;font:bold 13.330px/15px 'Liberation Sans',sans-serif">Data</i></div>
<div class="ob tm" style="left:491px;top:513.5px;width:29.6px;height:38.0px;"><i class="tx" style="left:5.85px;top:13.300px">[Row#]</i></div>
<div class="ob tm" style="left:519px;top:513.5px;width:199.6px;height:38.0px;"><i class="tx" style="left:6.20px;top:13.300px">[Assets.Name]</i></div>
<div class="ob tm" style="left:717px;top:513.5px;width:143.6px;height:38.0px;"><i class="tx" style="left:6.60px;top:13.300px">[Assets.Model]</i></div>
<div class="ob tm" style="left:859px;top:513.5px;width:124.6px;height:38.0px;"><i class="tx" style="left:6.30px;top:13.300px">[Assets.SerialNo]</i></div>
<div class="ob tm" style="left:982px;top:513.5px;width:125.1px;height:38.0px;"><i class="tx" style="left:6.20px;top:13.300px">[Assets.InventoryNo]</i></div>
<div class="ob tm" style="left:1104px;top:513.5px;width:105.4px;height:38.0px;"><i class="tx" style="left:7.00px;top:13.300px">[FormatDateTime([Assets.Date])]</i></div>
<div class="ob" style="left:897.0px;top:636.6px;width:95.2px;height:18.8px;"><i class="tx" style="left:5.800px;top:1.300px;font-style:italic;letter-spacing:-.16px">[FormatDateTime([Date],"dd.MM.yyyy")]</i></div>
<div class="abs" style="left:901px;top:654.600px;width:304px;height:1.200px;background:#111"></div>
<div class="ob" style="left:897.0px;top:659.7px;width:302.8px;height:19.7px;"><i class="tx" style="left:0;width:100%;text-align:center;top:-.2px;font-size:10.670px;padding-left:4.500px">(podpis)</i></div>
<div class="abs" style="left:500px;top:692.800px;width:717.500px;height:1px;background:#5a5a5a"></div>
<div class="ob" style="left:500.0px;top:702.2px;width:124.0px;height:19.4px;"><i class="tx" style="left:6px;top:2.200px">Oxari</i></div>
<svg class="abs" style="left:764px;top:705.400px" width="12" height="12" viewBox="0 0 12 12"><rect x=".5" y=".5" width="11" height="10.600" fill="#f7e4e4" stroke="#d48a88" stroke-width=".8" rx="1"/><rect x="1.800" y="3.800" width="8.400" height="4.800" fill="#6f6f6f"/><rect x="3.200" y="1.600" width="5.600" height="2.600" fill="#fff" stroke="#777" stroke-width=".6"/><rect x="3.200" y="6.600" width="5.600" height="3.400" fill="#fff" stroke="#777" stroke-width=".6"/></svg>
<div class="ob" style="left:774.3px;top:702.2px;width:255.4px;height:19.4px;"><i class="tx" style="left:5.400px;top:-4.500px;line-height:15px;white-space:normal;width:235px;letter-spacing:-.1px">[FormatDateTime([Date], "dd.MM.yyyy HH:mm:ss")]</i></div>
<div class="ob tm" style="left:1076.3px;top:702.2px;width:76.7px;height:19.4px;"><i class="tx" style="left:auto;right:4.500px;top:2.200px">Strona:</i></div>
<div class="ob tm" style="left:1153.0px;top:702.2px;width:18.6px;height:19.4px;"><i class="tx" style="left:auto;right:3.600px;top:2.200px">[Page]</i></div>
<div class="ob tm" style="left:1171.6px;top:702.2px;width:9.6px;height:19.4px;"><i class="tx" style="left:auto;right:-.5px;top:2.200px;color:#223a8a">/</i></div>
<div class="ob tm" style="left:1181.2px;top:702.2px;width:28.2px;height:19.4px;"><i class="tx" style="left:5.300px;top:2.200px;letter-spacing:-.2px">[TotalPages]</i></div>
</div></div>

<!-- ================= SCROLLBAR ================= -->
<div class="abs" style="left:1903px;top:0;width:17px;height:919px;background:#f1f1f1"></div>
<div class="abs" style="left:1905px;top:17px;width:13px;height:688px;background:#c1c1c1"></div>
<svg class="abs" style="left:1903px;top:0" width="17" height="17"><path d="M5 10.5 L8.5 6.5 L12 10.5Z" fill="#a3a3a3"/></svg>
<svg class="abs" style="left:1903px;top:902px" width="17" height="17"><path d="M5 6 L8.5 10 L12 6Z" fill="#505050"/></svg>

</body>
</html>
